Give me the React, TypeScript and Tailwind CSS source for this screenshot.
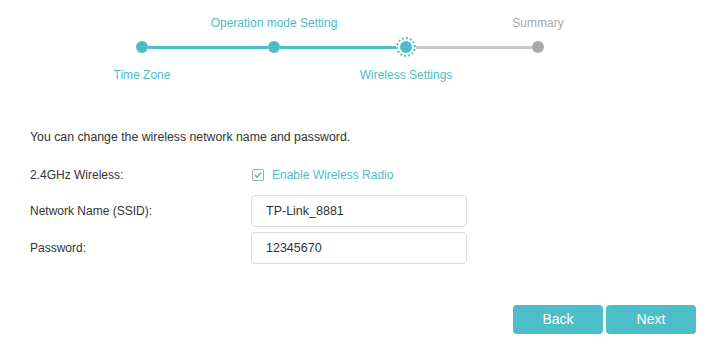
import React from "react";

const TEAL = "bg-[#4dbdc7]";

function Line({ kind }: { kind: "teal" | "gray" | "none" }) {
  const c = kind === "teal" ? "bg-[#4dbdc7]" : kind === "gray" ? "bg-[#c8c8c8]" : "bg-transparent";
  return <div className={`flex-1 h-[3px] ${c}`} />;
}

function Dot({ kind }: { kind: "done" | "current" | "todo" }) {
  if (kind === "current") {
    return (
      <div className="w-[20px] h-[20px] shrink-0 rounded-full border-2 border-dotted border-[#4dbdc7] flex items-center justify-center">
        <div className={`w-[12px] h-[12px] rounded-full ${TEAL}`} />
      </div>
    );
  }
  return (
    <div
      className={`w-[12px] h-[12px] shrink-0 rounded-full ${kind === "done" ? "bg-[#4dbdc7]" : "bg-[#a9a9ab]"}`}
    />
  );
}

export default function App() {
  return (
    <div
      className="w-[714px] h-[357px] bg-white text-[12px] text-[#333] overflow-hidden"
      style={{ fontFamily: '"Liberation Sans", Arial, sans-serif' }}
    >
      {/* Stepper */}
      <div className="pl-[76px] pt-[15px]">
        <div className="grid grid-cols-[132px_132px_132px_132px]">
          <div className="h-4" />
          <div className="h-4 leading-4 text-center text-[#4dbdc7] whitespace-nowrap">Operation mode Setting</div>
          <div className="h-4" />
          <div className="h-4 leading-4 text-center text-[#a8a8a8] whitespace-nowrap">Summary</div>
        </div>
        <div className="grid grid-cols-[132px_132px_132px_132px] mt-[10px]">
          <div className="flex items-center h-3">
            <Line kind="none" />
            <Dot kind="done" />
            <Line kind="teal" />
          </div>
          <div className="flex items-center h-3">
            <Line kind="teal" />
            <Dot kind="done" />
            <Line kind="teal" />
          </div>
          <div className="flex items-center h-3">
            <Line kind="teal" />
            <Dot kind="current" />
            <Line kind="gray" />
          </div>
          <div className="flex items-center h-3">
            <Line kind="gray" />
            <Dot kind="todo" />
            <Line kind="none" />
          </div>
        </div>
        <div className="grid grid-cols-[132px_132px_132px_132px] mt-[14px]">
          <div className="h-4 leading-4 text-center text-[#4dbdc7] whitespace-nowrap">Time Zone</div>
          <div className="h-4" />
          <div className="h-4 leading-4 text-center text-[#4dbdc7] whitespace-nowrap">Wireless Settings</div>
          <div className="h-4" />
        </div>
      </div>

      {/* Form */}
      <div className="pl-[30px]">
        <p className="mt-[46px] h-4 leading-4 text-[12.3px]">You can change the wireless network name and password.</p>

        <div className="flex items-center mt-[20px] h-5">
          <div className="w-[222px] leading-4">2.4GHz Wireless:</div>
          <label className="flex items-center gap-[8px]">
            <span className="w-[12px] h-[12px] border border-[#a9a9a9] rounded-[2px] flex items-center justify-center bg-white">
              <svg width="8" height="8" viewBox="0 0 8 8">
                <path d="M1 4.2 L3.1 6.2 L7 1.8" fill="none" stroke="#4dbdc7" strokeWidth="1.6" />
              </svg>
            </span>
            <span className="text-[#4dbdc7] leading-4">Enable Wireless Radio</span>
          </label>
        </div>

        <div className="flex items-center mt-[10px]">
          <div className="w-[221px] leading-4">Network Name (SSID):</div>
          <div className="w-[216px] h-[32px] border border-[#dcdcdc] rounded-[4px] pl-[14px] flex items-center text-[12.5px]">
            TP-Link_8881
          </div>
        </div>

        <div className="flex items-center mt-[5px]">
          <div className="w-[221px] leading-4">Password:</div>
          <div className="w-[216px] h-[32px] border border-[#dcdcdc] rounded-[4px] pl-[14px] flex items-center text-[12.5px]">
            12345670
          </div>
        </div>
      </div>

      <div className="flex justify-end gap-[3px] pr-[18px] mt-[41px]">
        <button className="w-[90px] h-[29px] rounded-[4px] bg-[#4dbdc7] text-white text-[14px]">Back</button>
        <button className="w-[90px] h-[29px] rounded-[4px] bg-[#4dbdc7] text-white text-[14px]">Next</button>
      </div>
    </div>
  );
}
